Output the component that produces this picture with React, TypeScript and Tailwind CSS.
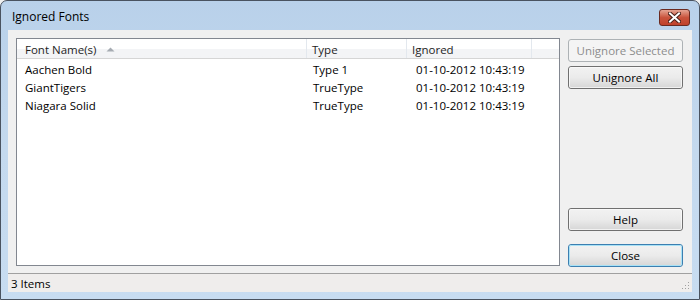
import React from 'react';

interface IRow {
	name: string;
	type: string;
	ignored: string;
}

const rows: IRow[] = [
	{ name: 'Aachen Bold', type: 'Type 1', ignored: '01-10-2012 10:43:19' },
	{ name: 'GiantTigers', type: 'TrueType', ignored: '01-10-2012 10:43:19' },
	{ name: 'Niagara Solid', type: 'TrueType', ignored: '01-10-2012 10:43:19' },
];

const Button = ({ label, disabled, isDefault }: { label: string; disabled?: boolean; isDefault?: boolean }) => {
	if (disabled) {
		return (
			<div className="h-[23px] w-[115px] rounded-[3px] border border-[#adb2b5] bg-[#f4f4f4] flex items-center justify-center text-[#8d8d8d]">
				{label}
			</div>
		);
	}
	return (
		<div
			className={`h-[23px] w-[115px] rounded-[3px] border ${
				isDefault ? 'border-[#3c7fb1]' : 'border-[#707070]'
			} bg-gradient-to-b from-[#f2f2f2] via-[#ebebeb] to-[#d6d6d6] flex items-center justify-center`}
		>
			<div
				className={`h-full w-full rounded-[2px] border ${
					isDefault ? 'border-[#a8e1f5]' : 'border-[#fcfcfc]/70'
				} flex items-center justify-center text-black`}
			>
				{label}
			</div>
		</div>
	);
};

const App = () => {
	return (
		<div className="w-[700px] h-[300px] bg-[#f0f0f0] font-['Open_Sans',sans-serif] text-[11.5px] leading-none">
			{/* Window frame */}
			<div className="w-full h-full flex flex-col rounded-t-[7px] border border-[#4a5360] bg-gradient-to-b from-[#b9d1ea] via-[#c4d9ee] to-[#c7dcf1]">
				{/* Title bar */}
				<div className="h-[29px] flex items-center justify-between pl-[11px] pr-[9px]">
					<span className="text-black text-[12px] pt-[2px]">Ignored Fonts</span>
					<div className="mt-[4px] h-[17px] w-[31px] rounded-[3px] border border-[#6b2a20] bg-gradient-to-b from-[#e5a392] via-[#c9533c] to-[#c0412a] flex items-center justify-center">
						<svg width="13" height="11" viewBox="0 0 13 11">
							<path d="M2 1.5 L11 9.5 M11 1.5 L2 9.5" stroke="#4a2018" strokeWidth="4" strokeLinecap="square" />
							<path d="M2 1.5 L11 9.5 M11 1.5 L2 9.5" stroke="#ffffff" strokeWidth="2" strokeLinecap="square" />
						</svg>
					</div>
				</div>

				{/* Client area */}
				<div className="flex-1 mx-[7px] mb-[7px] bg-[#f0f0f0] flex flex-col">
					<div className="flex-1 flex pt-[8px] pl-[8px] pr-[9px] pb-[7px] gap-[8px]">
						{/* List */}
						<div className="w-[544px] border border-[#828790] bg-white flex flex-col">
							{/* Header */}
							<div className="h-[20px] flex border-b border-[#d5d5d5] bg-gradient-to-b from-white from-50% to-[#f3f4f6] to-50% text-[#1e1e1e]">
								<div className="w-[290px] border-r border-[#e3e8ee] flex items-center pl-[8px] pt-[2px]">
									Font Name(s)
									<svg className="ml-[10px] mb-[1px]" width="9" height="5" viewBox="0 0 9 5">
										<path d="M0.5 4.5 L4.5 0.5 L8.5 4.5 Z" fill="#a6abb2" />
									</svg>
								</div>
								<div className="w-[100px] border-r border-[#e3e8ee] flex items-center pl-[5px] pt-[2px]">Type</div>
								<div className="w-[125px] border-r border-[#e3e8ee] flex items-center pl-[5px] pt-[2px]">Ignored</div>
								<div className="flex-1" />
							</div>
							{/* Rows */}
							<div className="pt-[2px]">
								{rows.map((row) => (
									<div key={row.name} className="h-[18px] flex items-center text-black">
										<div className="w-[290px] pl-[8px]">{row.name}</div>
										<div className="w-[100px] pl-[6px]">{row.type}</div>
										<div className="pl-[9px]">{row.ignored}</div>
									</div>
								))}
							</div>
						</div>
						{/* Buttons */}
						<div className="flex flex-col justify-between pt-[1px]">
							<div className="flex flex-col gap-[4px]">
								<Button label="Unignore Selected" disabled />
								<Button label="Unignore All" />
							</div>
							<div className="flex flex-col gap-[13px] mb-[-1px]">
								<Button label="Help" />
								<Button label="Close" isDefault />
							</div>
						</div>
					</div>
					{/* Status bar */}
					<div className="h-[19px] border-t border-[#a0a0a0] bg-[#efedec] flex items-center justify-between pl-[3px] pr-[2px] text-black">
						<span className="pt-[1px]">3 Items</span>
						<svg width="8" height="8" viewBox="0 0 8 8" className="self-end mb-[2px]">
							<rect x="6" y="0" width="1" height="1" fill="#a0a0a0" />
							<rect x="3" y="3" width="1" height="1" fill="#a0a0a0" />
							<rect x="6" y="3" width="1" height="1" fill="#a0a0a0" />
							<rect x="0" y="6" width="1" height="1" fill="#a0a0a0" />
							<rect x="3" y="6" width="1" height="1" fill="#a0a0a0" />
							<rect x="6" y="6" width="1" height="1" fill="#a0a0a0" />
						</svg>
					</div>
				</div>
			</div>
		</div>
	);
};

export default App;
